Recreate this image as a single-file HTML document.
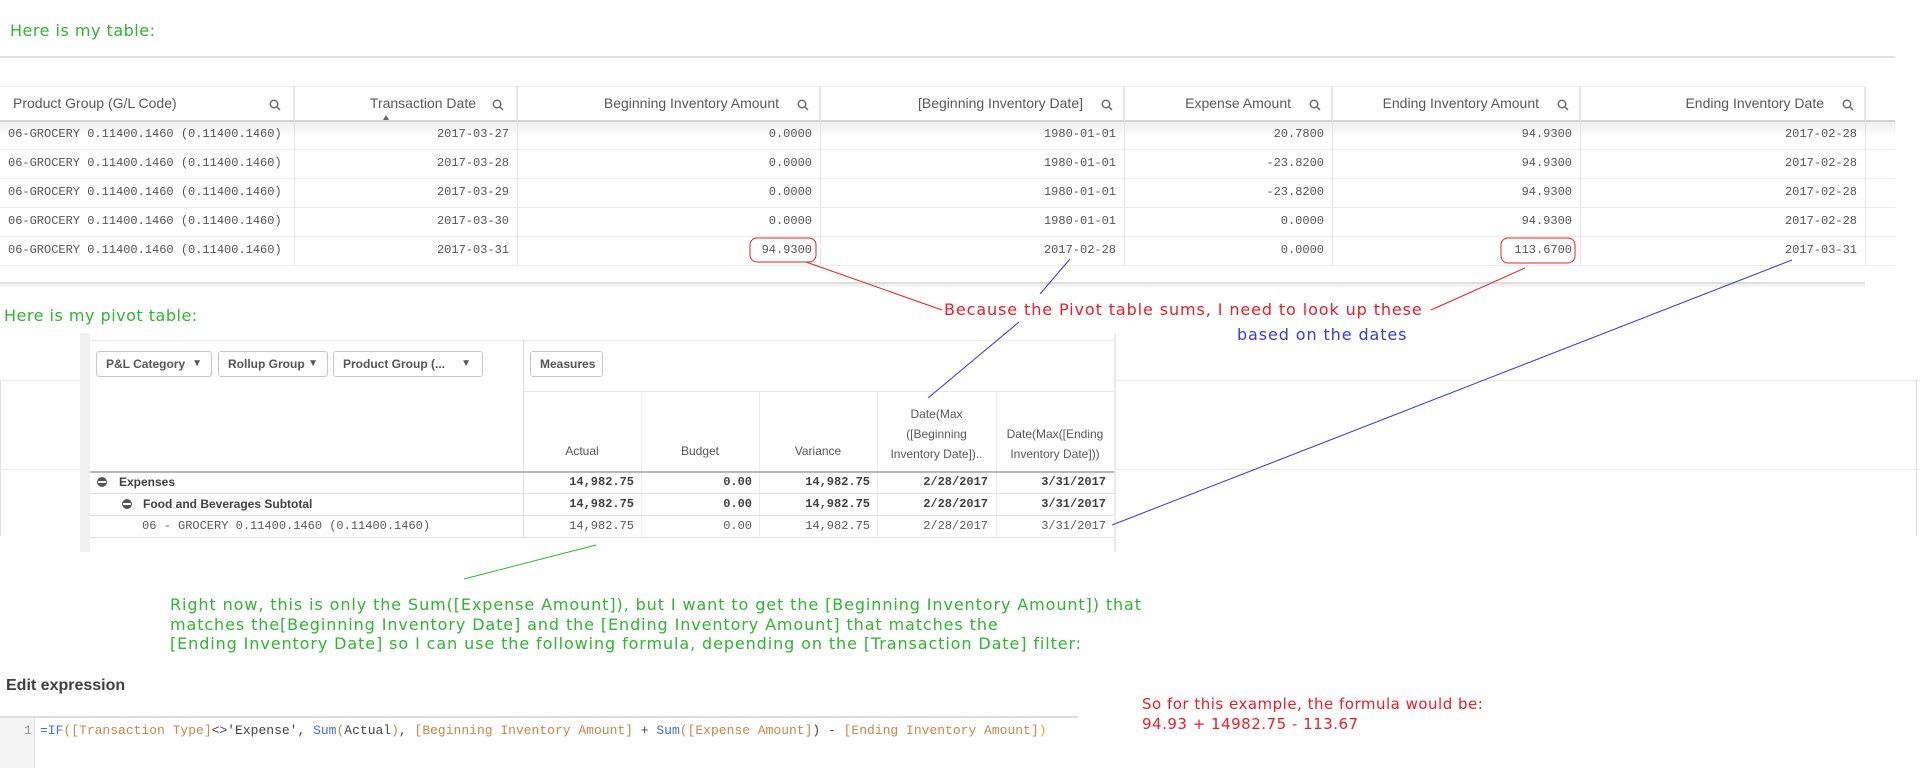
<!DOCTYPE html>
<html><head><meta charset="utf-8"><style>
*{margin:0;padding:0;box-sizing:border-box}
body{width:1920px;height:768px;background:#fff;position:relative;overflow:hidden;font-family:"Liberation Sans",sans-serif;color:#595959}
.a{position:absolute;white-space:nowrap}
.note{font-family:"DejaVu Sans",sans-serif;font-size:16px;letter-spacing:0.9px}
.g{color:#2fb52f}
.r{color:#ee1c24}
.b{color:#3a3ad6}
.hd{position:absolute;top:87px;height:33px;border-right:1px solid #e6e6e6;font-size:14px;color:#595959;line-height:33px}
.cell{position:absolute;font-family:"Liberation Mono",monospace;font-size:12px;color:#555;line-height:29px;text-align:right}
.hl{position:absolute;left:0;width:1865px;height:1px;background:#ececec}
.btn{position:absolute;top:351px;height:26px;border:1px solid #c8c8c8;border-radius:3px;font-size:12px;font-weight:bold;color:#555;line-height:24px;padding-left:9px}
.pv{position:absolute;font-size:12px;color:#595959;text-align:right}
.bold{font-weight:bold;color:#404040}
.mono{font-family:"Liberation Mono",monospace}
.code{font-family:"Liberation Mono",monospace;font-size:13px}
</style></head><body>

<div class="a note g" style="left:10px;top:21px;letter-spacing:0.5px">Here is my table:</div>
<div class="a" style="left:0;top:56px;width:1895px;height:2px;background:#e2e2e2"></div>

<div class="a" style="left:0;top:86px;width:1865px;height:1px;background:#ececec"></div>
<div class="hd" style="left:0;width:294px;padding-left:13px">Product Group (G/L Code)</div>
<div class="hd" style="left:294px;width:223px;text-align:right;padding-right:40px">Transaction Date</div>
<div class="hd" style="left:517px;width:303px;text-align:right;padding-right:40px">Beginning Inventory Amount</div>
<div class="hd" style="left:820px;width:304px;text-align:right;padding-right:40px">[Beginning Inventory Date]</div>
<div class="hd" style="left:1124px;width:208px;text-align:right;padding-right:40px">Expense Amount</div>
<div class="hd" style="left:1332px;width:248px;text-align:right;padding-right:40px">Ending Inventory Amount</div>
<div class="hd" style="left:1580px;width:285px;text-align:right;padding-right:40px">Ending Inventory Date</div>
<svg class="a" style="left:0;top:0" width="1920" height="130">
<g fill="none" stroke="#666" stroke-width="1.4">
<circle cx="274" cy="104" r="3.8"/><line x1="277" y1="107" x2="280" y2="110"/>
<circle cx="497" cy="104" r="3.8"/><line x1="500" y1="107" x2="503" y2="110"/>
<circle cx="802" cy="104" r="3.8"/><line x1="805" y1="107" x2="808" y2="110"/>
<circle cx="1106" cy="104" r="3.8"/><line x1="1109" y1="107" x2="1112" y2="110"/>
<circle cx="1314" cy="104" r="3.8"/><line x1="1317" y1="107" x2="1320" y2="110"/>
<circle cx="1562" cy="104" r="3.8"/><line x1="1565" y1="107" x2="1568" y2="110"/>
<circle cx="1847" cy="104" r="3.8"/><line x1="1850" y1="107" x2="1853" y2="110"/>
</g>
<polygon points="383,120 389,120 386,115" fill="#666"/>
</svg>
<div class="a" style="left:0;top:120px;width:1895px;height:2px;background:#d4d4d4"></div>
<div class="a" style="left:0;top:122px;width:1895px;height:14px;background:linear-gradient(#eeeeee,#fff)"></div>
<div class="a" style="left:294px;top:87px;width:1px;height:178px;background:#e6e6e6"></div>
<div class="a" style="left:517px;top:87px;width:1px;height:178px;background:#e6e6e6"></div>
<div class="a" style="left:820px;top:87px;width:1px;height:178px;background:#e6e6e6"></div>
<div class="a" style="left:1124px;top:87px;width:1px;height:178px;background:#e6e6e6"></div>
<div class="a" style="left:1332px;top:87px;width:1px;height:178px;background:#e6e6e6"></div>
<div class="a" style="left:1580px;top:87px;width:1px;height:178px;background:#e6e6e6"></div>
<div class="a" style="left:1865px;top:87px;width:1px;height:178px;background:#e6e6e6"></div>
<div class="hl" style="top:149px;width:1895px"></div><div class="hl" style="top:178px;width:1895px"></div><div class="hl" style="top:207px;width:1895px"></div><div class="hl" style="top:236px;width:1895px"></div><div class="hl" style="top:265px;width:1895px"></div>
<div class="a" style="left:0;top:282px;width:1865px;height:2px;background:#dedede"></div>
<div class="a" style="left:0;top:284px;width:1865px;height:3px;background:#f3f3f3"></div>

<div class="cell" style="left:8px;top:120px;text-align:left">06-GROCERY 0.11400.1460 (0.11400.1460)</div>
<div class="cell" style="left:8px;top:149px;text-align:left">06-GROCERY 0.11400.1460 (0.11400.1460)</div>
<div class="cell" style="left:8px;top:178px;text-align:left">06-GROCERY 0.11400.1460 (0.11400.1460)</div>
<div class="cell" style="left:8px;top:207px;text-align:left">06-GROCERY 0.11400.1460 (0.11400.1460)</div>
<div class="cell" style="left:8px;top:236px;text-align:left">06-GROCERY 0.11400.1460 (0.11400.1460)</div>

<div class="cell" style="left:294px;width:215px;top:120px">2017-03-27</div>
<div class="cell" style="left:294px;width:215px;top:149px">2017-03-28</div>
<div class="cell" style="left:294px;width:215px;top:178px">2017-03-29</div>
<div class="cell" style="left:294px;width:215px;top:207px">2017-03-30</div>
<div class="cell" style="left:294px;width:215px;top:236px">2017-03-31</div>

<div class="cell" style="left:517px;width:295px;top:120px">0.0000</div>
<div class="cell" style="left:517px;width:295px;top:149px">0.0000</div>
<div class="cell" style="left:517px;width:295px;top:178px">0.0000</div>
<div class="cell" style="left:517px;width:295px;top:207px">0.0000</div>
<div class="cell" style="left:517px;width:295px;top:236px">94.9300</div>

<div class="cell" style="left:820px;width:296px;top:120px">1980-01-01</div>
<div class="cell" style="left:820px;width:296px;top:149px">1980-01-01</div>
<div class="cell" style="left:820px;width:296px;top:178px">1980-01-01</div>
<div class="cell" style="left:820px;width:296px;top:207px">1980-01-01</div>
<div class="cell" style="left:820px;width:296px;top:236px">2017-02-28</div>

<div class="cell" style="left:1124px;width:200px;top:120px">20.7800</div>
<div class="cell" style="left:1124px;width:200px;top:149px">-23.8200</div>
<div class="cell" style="left:1124px;width:200px;top:178px">-23.8200</div>
<div class="cell" style="left:1124px;width:200px;top:207px">0.0000</div>
<div class="cell" style="left:1124px;width:200px;top:236px">0.0000</div>

<div class="cell" style="left:1332px;width:240px;top:120px">94.9300</div>
<div class="cell" style="left:1332px;width:240px;top:149px">94.9300</div>
<div class="cell" style="left:1332px;width:240px;top:178px">94.9300</div>
<div class="cell" style="left:1332px;width:240px;top:207px">94.9300</div>
<div class="cell" style="left:1332px;width:240px;top:236px">113.6700</div>

<div class="cell" style="left:1580px;width:277px;top:120px">2017-02-28</div>
<div class="cell" style="left:1580px;width:277px;top:149px">2017-02-28</div>
<div class="cell" style="left:1580px;width:277px;top:178px">2017-02-28</div>
<div class="cell" style="left:1580px;width:277px;top:207px">2017-02-28</div>
<div class="cell" style="left:1580px;width:277px;top:236px">2017-03-31</div>

<div class="a note r" style="left:944px;top:300px">Because the Pivot table sums, I need to look up these</div>
<div class="a note b" style="left:1237px;top:325px">based on the dates</div>
<div class="a note g" style="left:4px;top:306px;letter-spacing:0.5px">Here is my pivot table:</div>

<div class="a" style="left:0;top:380px;width:1px;height:156px;background:#e0e0e0"></div>
<div class="a" style="left:0;top:380px;width:82px;height:1px;background:#ececec"></div>
<div class="a" style="left:1114px;top:380px;width:806px;height:1px;background:#ececec"></div>
<div class="a" style="left:0;top:469px;width:82px;height:1px;background:#ececec"></div>
<div class="a" style="left:1114px;top:469px;width:806px;height:1px;background:#ececec"></div>
<div class="a" style="left:1916px;top:380px;width:1px;height:156px;background:#e0e0e0"></div>

<div class="a" style="left:80px;top:333px;width:10px;height:219px;background:#f0f0f0"></div>
<div class="a" style="left:1114px;top:333px;width:2px;height:219px;background:#eaeaea"></div>
<div class="a" style="left:90px;top:340px;width:1024px;height:1px;background:#ececec"></div>
<div class="a" style="left:523px;top:340px;width:1px;height:197px;background:#e0e0e0"></div>
<div class="a" style="left:523px;top:391px;width:591px;height:1px;background:#e6e6e6"></div>
<div class="a" style="left:641px;top:391px;width:1px;height:146px;background:#ececec"></div>
<div class="a" style="left:759px;top:391px;width:1px;height:146px;background:#ececec"></div>
<div class="a" style="left:877px;top:391px;width:1px;height:146px;background:#ececec"></div>
<div class="a" style="left:996px;top:391px;width:1px;height:146px;background:#ececec"></div>
<div class="a" style="left:90px;top:471px;width:1024px;height:2px;background:#b8b8b8"></div>
<div class="a" style="left:90px;top:493px;width:1024px;height:1px;background:#e0e0e0"></div>
<div class="a" style="left:90px;top:515px;width:1024px;height:1px;background:#e0e0e0"></div>
<div class="a" style="left:90px;top:537px;width:1024px;height:1px;background:#e0e0e0"></div>

<div class="btn" style="left:96px;width:116px">P&amp;L Category <span style="position:absolute;right:9px;font-size:10px">▼</span></div>
<div class="btn" style="left:218px;width:110px">Rollup Group <span style="position:absolute;right:9px;font-size:10px">▼</span></div>
<div class="btn" style="left:333px;width:150px">Product Group (... <span style="position:absolute;right:11px;font-size:10px">▼</span></div>
<div class="btn" style="left:530px;width:73px">Measures</div>

<div class="pv" style="left:523px;width:118px;top:444px;text-align:center">Actual</div>
<div class="pv" style="left:641px;width:118px;top:444px;text-align:center">Budget</div>
<div class="pv" style="left:759px;width:118px;top:444px;text-align:center">Variance</div>
<div class="pv" style="left:877px;width:119px;top:404px;text-align:center;line-height:20px">Date(Max<br>([Beginning<br>Inventory Date])..</div>
<div class="pv" style="left:996px;width:118px;top:424px;text-align:center;line-height:20px">Date(Max([Ending<br>Inventory Date]))</div>

<svg class="a" style="left:0;top:0" width="200" height="540">
<circle cx="102" cy="482" r="5" fill="#555"/><rect x="98" y="481" width="8" height="2" fill="#fff"/>
<circle cx="127" cy="504" r="5" fill="#555"/><rect x="123" y="503" width="8" height="2" fill="#fff"/>
</svg>
<div class="pv bold" style="left:119px;top:475px;text-align:left">Expenses</div>
<div class="pv bold" style="left:143px;top:497px;text-align:left">Food and Beverages Subtotal</div>
<div class="pv mono" style="left:142px;top:519px;text-align:left;font-size:12px">06 - GROCERY 0.11400.1460 (0.11400.1460)</div>

<div class="pv bold mono" style="left:523px;width:111px;top:475px">14,982.75</div>
<div class="pv bold mono" style="left:641px;width:111px;top:475px">0.00</div>
<div class="pv bold mono" style="left:759px;width:111px;top:475px">14,982.75</div>
<div class="pv bold mono" style="left:877px;width:111px;top:475px">2/28/2017</div>
<div class="pv bold mono" style="left:996px;width:110px;top:475px">3/31/2017</div>
<div class="pv bold mono" style="left:523px;width:111px;top:497px">14,982.75</div>
<div class="pv bold mono" style="left:641px;width:111px;top:497px">0.00</div>
<div class="pv bold mono" style="left:759px;width:111px;top:497px">14,982.75</div>
<div class="pv bold mono" style="left:877px;width:111px;top:497px">2/28/2017</div>
<div class="pv bold mono" style="left:996px;width:110px;top:497px">3/31/2017</div>
<div class="pv mono" style="left:523px;width:111px;top:519px">14,982.75</div>
<div class="pv mono" style="left:641px;width:111px;top:519px">0.00</div>
<div class="pv mono" style="left:759px;width:111px;top:519px">14,982.75</div>
<div class="pv mono" style="left:877px;width:111px;top:519px">2/28/2017</div>
<div class="pv mono" style="left:996px;width:110px;top:519px">3/31/2017</div>

<div class="a note g" style="left:170px;top:595px;line-height:19.5px">Right now, this is only the Sum([Expense Amount]), but I want to get the [Beginning Inventory Amount]) that<br>matches the[Beginning Inventory Date] and the [Ending Inventory Amount] that matches the<br>[Ending Inventory Date] so I can use the following formula, depending on the [Transaction Date] filter:</div>

<div class="a" style="left:6px;top:677px;font-size:16px;font-weight:bold;color:#404040">Edit expression</div>

<div class="a note r" style="left:1142px;top:694px;line-height:20px;font-size:15px;letter-spacing:0.5px">So for this example, the formula would be:<br>94.93 + 14982.75 - 113.67</div>

<div class="a" style="left:0;top:716px;width:1078px;height:2px;background:#dcdcdc"></div>
<div class="a" style="left:0;top:718px;width:35px;height:50px;background:#f4f4f4;border-right:1px solid #e2e2e2"></div>
<div class="a code" style="left:24px;top:723px;color:#999">1</div>
<div class="a code" style="left:40px;top:723px;color:#444"><span style="color:#4a6fd0">=IF</span><span style="color:#c8874a">(</span><span style="color:#c8874a">[Transaction Type]</span>&lt;&gt;'Expense', <span style="color:#4a6fd0">Sum</span><span style="color:#c8874a">(</span>Actual<span style="color:#c8874a">)</span>, <span style="color:#c8874a">[Beginning Inventory Amount]</span> + <span style="color:#4a6fd0">Sum</span><span style="color:#c8874a">([Expense Amount]</span>) - <span style="color:#c8874a">[Ending Inventory Amount]</span><span style="color:#e0b020">)</span></div>

<svg class="a" style="left:0;top:0" width="1920" height="768">
<g fill="none" stroke-width="1">
<rect x="750" y="238" width="66" height="24" rx="7" stroke="#ee1c24"/>
<rect x="1501" y="238" width="74" height="25" rx="7" stroke="#ee1c24"/>
<line x1="806" y1="262" x2="942" y2="310" stroke="#ee1c24"/>
<line x1="1525" y1="268" x2="1431" y2="310" stroke="#ee1c24"/>
<line x1="1070" y1="259" x2="1040" y2="294" stroke="#3a3ad6"/>
<line x1="1019" y1="322" x2="928" y2="398" stroke="#3a3ad6"/>
<line x1="1792" y1="260" x2="1112" y2="525" stroke="#3a3ad6"/>
<line x1="596" y1="545" x2="464" y2="579" stroke="#2fb52f"/>
</g>
</svg>
</body></html>
